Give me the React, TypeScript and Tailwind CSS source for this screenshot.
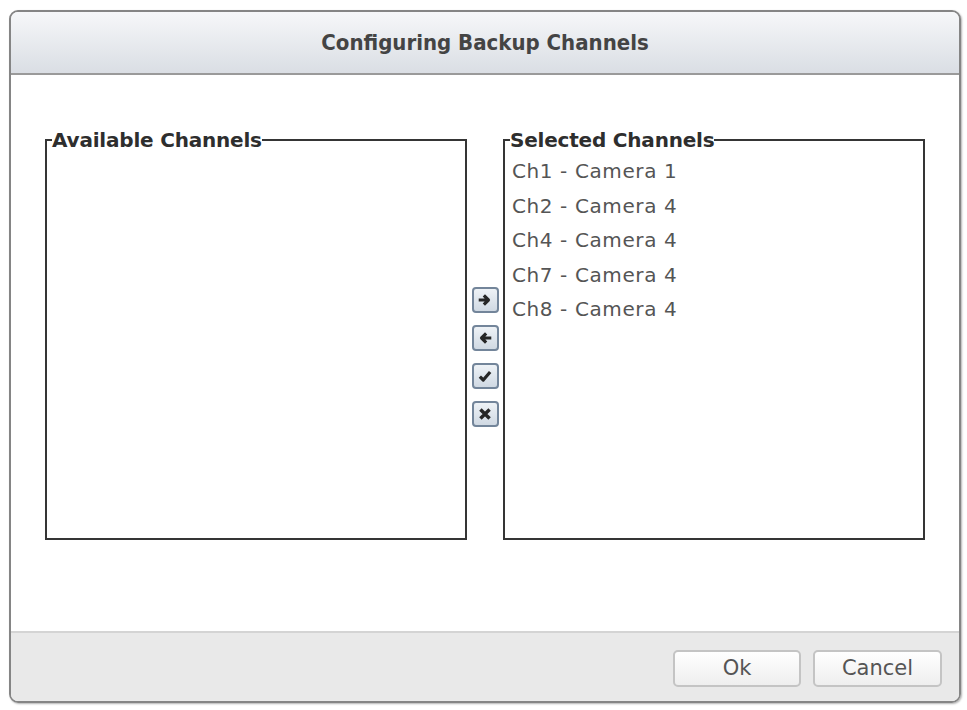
import React from "react";

const channels = [
  "Ch1 - Camera 1",
  "Ch2 - Camera 4",
  "Ch4 - Camera 4",
  "Ch7 - Camera 4",
  "Ch8 - Camera 4",
];

function MoveButton({ kind }: { kind: "right" | "left" | "all" | "none" }) {
  return (
    <button className="w-[27px] h-[26px] rounded-[4px] border-2 border-[#73859a] bg-gradient-to-b from-[#eef2f6] to-[#d0d9e3] flex items-center justify-center">
      <svg width="16" height="16" viewBox="0 0 14 14">
        {kind === "right" && (
          <path d="M1.5 7h8M6 3l4 4-4 4" stroke="#262626" strokeWidth="2.8" fill="none" strokeLinejoin="round" />
        )}
        {kind === "left" && (
          <path d="M12.5 7h-8M8 3l-4 4 4 4" stroke="#262626" strokeWidth="2.8" fill="none" strokeLinejoin="round" />
        )}
        {kind === "all" && (
          <path d="M2.5 7.5l3 3 6-7" stroke="#262626" strokeWidth="2.8" fill="none" strokeLinejoin="round" />
        )}
        {kind === "none" && (
          <path d="M3 3l8 8M11 3l-8 8" stroke="#262626" strokeWidth="3" fill="none" />
        )}
      </svg>
    </button>
  );
}

function ChannelBox({ title, items }: { title: string; items: string[] }) {
  return (
    <fieldset className="w-[422px] h-[412px] border-2 border-[#353535] px-[5px] m-0">
      <legend className="px-0 text-[20px] leading-[24px] font-bold text-[#2e2e2e] tracking-[-0.2px] mt-[1px]">
        {title}
      </legend>
      <ul className="pt-[2px] pl-[2px]">
        {items.map((item) => (
          <li key={item} className="text-[20px] leading-[34.5px] text-[#555] tracking-[0.6px]">
            {item}
          </li>
        ))}
      </ul>
    </fieldset>
  );
}

export default function App() {
  return (
    <div className="w-[967px] h-[710px] bg-white pt-[10px] pl-[9px]" style={{ fontFamily: '"DejaVu Sans", Verdana, sans-serif' }}>
      <div className="w-[952px] h-[693px] border-2 border-[#858585] rounded-[9px] overflow-hidden flex flex-col shadow-[1px_1px_2px_rgba(0,0,0,0.3)]">
        <div className="h-[63px] shrink-0 bg-gradient-to-b from-[#f6f7f9] to-[#dadee4] border-b-2 border-[#9a9a9a] flex items-center justify-center">
          <h1
            className="text-[22px] font-bold text-[#444]"
            style={{ fontFamily: '"DejaVu Sans Condensed", "DejaVu Sans", sans-serif', fontStretch: "condensed" }}
          >
            Configuring Backup Channels
          </h1>
        </div>

        <div className="flex-1 bg-white pt-[53px] pl-[34px]">
          <div className="flex">
            <ChannelBox title="Available Channels" items={[]} />
            <div className="w-[36px] flex flex-col items-center gap-[12px] pt-[159px]">
              <MoveButton kind="right" />
              <MoveButton kind="left" />
              <MoveButton kind="all" />
              <MoveButton kind="none" />
            </div>
            <ChannelBox title="Selected Channels" items={channels} />
          </div>
        </div>

        <div className="h-[70px] shrink-0 bg-[#e9e9e9] border-t-2 border-[#d4d4d4] flex items-start justify-end gap-[12px] pr-[17px] pt-[17px]">
          <button className="w-[128px] h-[37px] rounded-[5px] border-2 border-[#c4c4c4] bg-gradient-to-b from-white to-[#eeeeee] text-[21px] text-[#555]">
            Ok
          </button>
          <button className="w-[129px] h-[37px] rounded-[5px] border-2 border-[#c4c4c4] bg-gradient-to-b from-white to-[#eeeeee] text-[21px] text-[#555]">
            Cancel
          </button>
        </div>
      </div>
    </div>
  );
}
